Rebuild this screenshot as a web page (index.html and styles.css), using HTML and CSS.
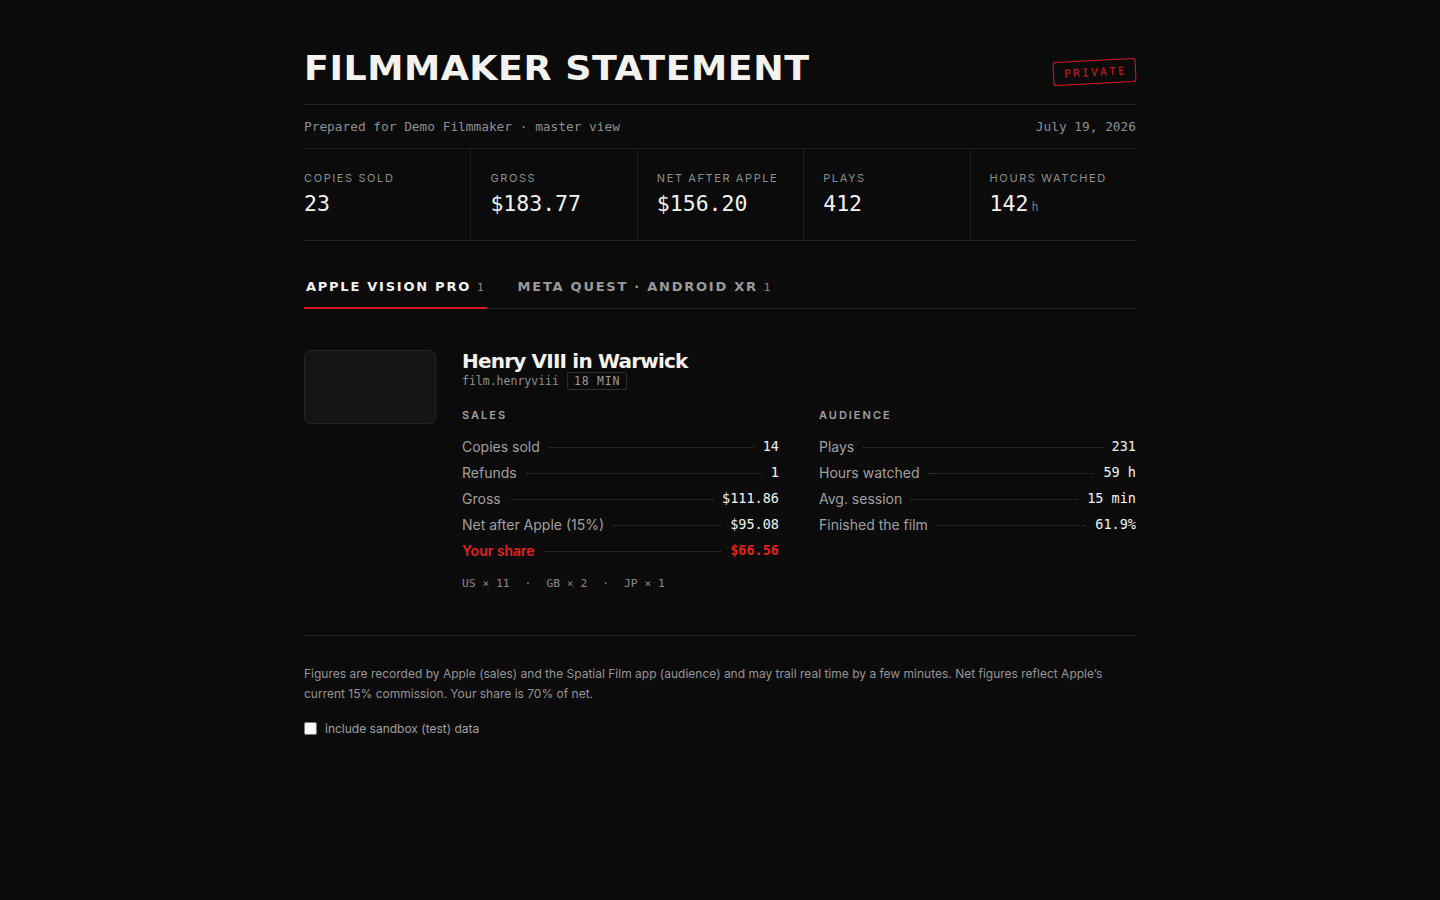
FILE: index.html
```html
<!DOCTYPE html>
<html lang="en">
<head>
<meta charset="utf-8">
<title>Filmmaker Statement</title>
<link rel="stylesheet" href="styles.css">
</head>
<body>
<main class="page">
  <header class="head">
    <h1 class="title">FILMMAKER STATEMENT</h1>
    <span class="stamp">PRIVATE</span>
  </header>
  <div class="prep">
    <span>Prepared for Demo Filmmaker · master view</span>
    <span>July 19, 2026</span>
  </div>
  <section class="stats">
    <div class="stat"><div class="stat-label">COPIES SOLD</div><div class="stat-value">23</div></div>
    <div class="stat"><div class="stat-label">GROSS</div><div class="stat-value">$183.77</div></div>
    <div class="stat"><div class="stat-label">NET AFTER APPLE</div><div class="stat-value">$156.20</div></div>
    <div class="stat"><div class="stat-label">PLAYS</div><div class="stat-value">412</div></div>
    <div class="stat"><div class="stat-label">HOURS WATCHED</div><div class="stat-value">142<span class="unit">h</span></div></div>
  </section>
  <nav class="tabs">
    <div class="tab active">APPLE VISION PRO<span class="count">1</span></div>
    <div class="tab">META QUEST · ANDROID XR<span class="count">1</span></div>
  </nav>
  <section class="film">
    <div class="thumb"></div>
    <div class="film-body">
      <h2 class="film-title">Henry VIII in Warwick</h2>
      <div class="meta"><span class="slug">film.henryviii</span><span class="badge">18 MIN</span></div>
      <div class="cols">
        <div class="col">
          <div class="col-label">SALES</div>
          <div class="row"><span class="k">Copies sold</span><span class="dots"></span><span class="v">14</span></div>
          <div class="row"><span class="k">Refunds</span><span class="dots"></span><span class="v">1</span></div>
          <div class="row"><span class="k">Gross</span><span class="dots"></span><span class="v">$111.86</span></div>
          <div class="row"><span class="k">Net after Apple (15%)</span><span class="dots"></span><span class="v">$95.08</span></div>
          <div class="row share"><span class="k">Your share</span><span class="dots"></span><span class="v">$66.56</span></div>
          <div class="countries"><span>US × 11</span><span>·</span><span>GB × 2</span><span>·</span><span>JP × 1</span></div>
        </div>
        <div class="col">
          <div class="col-label">AUDIENCE</div>
          <div class="row"><span class="k">Plays</span><span class="dots"></span><span class="v">231</span></div>
          <div class="row"><span class="k">Hours watched</span><span class="dots"></span><span class="v">59 h</span></div>
          <div class="row"><span class="k">Avg. session</span><span class="dots"></span><span class="v">15 min</span></div>
          <div class="row"><span class="k">Finished the film</span><span class="dots"></span><span class="v">61.9%</span></div>
        </div>
      </div>
    </div>
  </section>
  <footer class="foot">
    <p class="note">Figures are recorded by Apple (sales) and the Spatial Film app (audience) and may trail real time by a few minutes. Net figures reflect Apple’s current 15% commission. Your share is 70% of net.</p>
    <label class="check"><input type="checkbox"><span>include sandbox (test) data</span></label>
  </footer>
</main>
</body>
</html>
```

FILE: styles.css
```css
* { box-sizing: border-box; }
html, body { margin: 0; padding: 0; }
body {
  background: #0b0b0b;
  color: #f2f2f0;
  font-family: Inter, "Noto Sans", sans-serif;
  min-height: 900px;
}
.page {
  width: 832px;
  margin: 0 auto;
  padding-top: 51px;
}
.head {
  display: flex;
  justify-content: space-between;
  align-items: center;
  padding-bottom: 19px;
  border-bottom: 1px solid #262626;
}
.title {
  margin: 0;
  font-family: "DejaVu Sans", sans-serif;
  font-weight: 700;
  font-size: 34px;
  line-height: 34px;
  letter-spacing: 0.5px;
  color: #f3f2ee;
  transform: scaleX(1.07);
  transform-origin: left center;
}
.stamp {
  font-family: "DejaVu Sans Mono", monospace;
  font-size: 11px;
  letter-spacing: 2.4px;
  color: #d21a20;
  border: 1px solid #d21a20;
  border-radius: 3px;
  padding: 5px 8px 4px 10px;
  transform: rotate(-3deg);
  margin-top: 8px;
}
.prep {
  display: flex;
  justify-content: space-between;
  align-items: center;
  height: 43px;
  font-family: "DejaVu Sans Mono", monospace;
  font-size: 12.8px;
  color: #8e8e8e;
}
.stats {
  display: grid;
  grid-template-columns: repeat(5, 1fr);
  border-top: 1px solid #1e1e1e;
  border-bottom: 1px solid #262626;
}
.stat {
  padding: 22px 0 20px 19px;
  border-left: 1px solid #1e1e1e;
}
.stat:first-child { border-left: none; padding-left: 0; }
.stat-label {
  font-size: 11px;
  line-height: 14px;
  letter-spacing: 1.6px;
  color: #8e8e8e;
}
.stat-value {
  margin-top: 6px;
  font-family: "DejaVu Sans Mono", monospace;
  font-size: 21.5px;
  line-height: 26px;
  color: #f2f2f0;
}
.unit {
  font-size: 12px;
  color: #777;
  margin-left: 3px;
}
.tabs {
  display: flex;
  gap: 29px;
  margin-top: 27px;
  border-bottom: 1px solid #262626;
}
.tab {
  padding: 11px 3px 11px 2px;
  margin-bottom: -1px;
  border-bottom: 2px solid transparent;
  font-family: "DejaVu Sans", sans-serif;
  font-weight: 700;
  font-size: 13px;
  line-height: 16px;
  letter-spacing: 1.75px;
  color: #9a9a9a;
}
.tab.active {
  color: #f2f2f0;
  border-bottom-color: #d21a20;
}
.count {
  font-family: "DejaVu Sans Mono", monospace;
  font-weight: 400;
  font-size: 11px;
  letter-spacing: 0;
  color: #8a8a8a;
  margin-left: 6px;
}
.film {
  display: flex;
  gap: 26px;
  padding: 41px 0 44px;
  border-bottom: 1px solid #262626;
}
.thumb {
  flex: 0 0 132px;
  height: 74px;
  background: #141416;
  border: 1px solid #232326;
  border-radius: 7px;
}
.film-body { flex: 1; }
.film-title {
  margin: 0;
  font-family: "DejaVu Sans", sans-serif;
  font-weight: 700;
  font-size: 20px;
  line-height: 22px;
  letter-spacing: -0.8px;
  color: #f3f2ee;
}
.meta {
  display: flex;
  align-items: center;
  gap: 8px;
  margin-top: 0;
  font-family: "DejaVu Sans Mono", monospace;
}
.slug {
  font-size: 11.5px;
  color: #8e8e8e;
}
.badge {
  font-size: 11.5px;
  letter-spacing: 0.8px;
  color: #9a9a9a;
  border: 1px solid #2e2e2e;
  border-radius: 2px;
  padding: 1px 6px 1px 6px;
  line-height: 14px;
}
.cols {
  display: grid;
  grid-template-columns: 1fr 1fr;
  gap: 40px;
  margin-top: 18px;
}
.col-label {
  font-size: 11px;
  font-weight: 600;
  line-height: 14px;
  letter-spacing: 2px;
  color: #a0a0a0;
  margin-bottom: 11px;
}
.row {
  display: flex;
  align-items: center;
  height: 26px;
}
.k {
  font-size: 14px;
  color: #a0a0a0;
}
.dots {
  flex: 1;
  border-bottom: 1px dotted #3a3a3a;
  margin: 2px 9px 0;
}
.v {
  font-family: "DejaVu Sans Mono", monospace;
  font-size: 13.5px;
  color: #f2f2f0;
}
.share .k, .share .v { color: #e0221c; font-weight: 600; }
.share .v { font-weight: 700; }
.countries {
  display: flex;
  gap: 15px;
  margin-top: 14px;
  font-family: "DejaVu Sans Mono", monospace;
  font-size: 11.3px;
  line-height: 14px;
  color: #8a8a8a;
}
.foot {
  padding-top: 28px;
}
.note {
  margin: 0;
  font-size: 12px;
  line-height: 20px;
  color: #959595;
}
.check {
  display: flex;
  align-items: center;
  gap: 8px;
  margin-top: 17px;
  font-size: 12px;
  color: #a0a0a0;
}
.check input {
  margin: 0;
  width: 13px;
  height: 13px;
}
```
